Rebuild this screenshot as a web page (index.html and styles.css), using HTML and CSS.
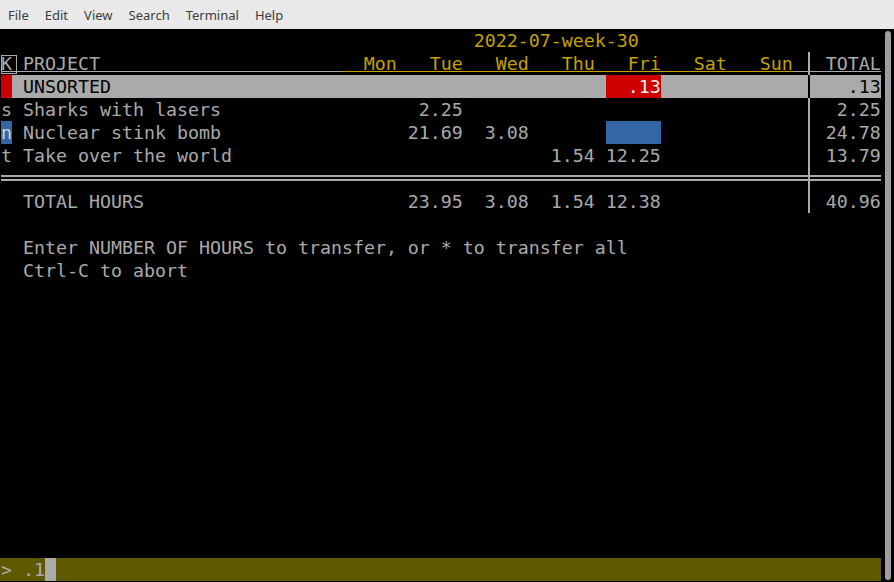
FILE: index.html
```html
<!DOCTYPE html>
<html>
<head>
<meta charset="utf-8">
<title>Terminal</title>
<link rel="stylesheet" href="styles.css">
</head>
<body>
<div class="window">
  <nav class="menubar">
    <span>File</span><span>Edit</span><span>View</span><span>Search</span><span>Terminal</span><span>Help</span>
  </nav>
  <div class="term">
    <div class="screen">
      <div class="row"><span class="week">2022-07-week-30</span></div>
      <div class="row head">
        <span class="main"><span class="c kbox ul">K</span><span class="name ul">PROJECT</span><span class="days ul-y">  Mon   Tue   Wed   Thu   Fri   Sat   Sun</span><span class="c ul"> </span></span><span class="vbar"></span><span class="tot ul">TOTAL</span>
      </div>
      <div class="row sel">
        <span class="main"><span class="c red"></span><span class="name">UNSORTED</span><span class="d"></span><span class="d"></span><span class="d"></span><span class="d"></span><span class="d hot">.13</span><span class="d"></span><span class="d"></span></span><span class="vbar"></span><span class="tot">.13</span>
      </div>
      <div class="row">
        <span class="main"><span class="c">s</span><span class="name">Sharks with lasers</span><span class="d"></span><span class="d">2.25</span><span class="d"></span><span class="d"></span><span class="d"></span><span class="d"></span><span class="d"></span></span><span class="vbar"></span><span class="tot">2.25</span>
      </div>
      <div class="row">
        <span class="main"><span class="c key">n</span><span class="name">Nuclear stink bomb</span><span class="d"></span><span class="d">21.69</span><span class="d">3.08</span><span class="d"></span><span class="d blue"></span><span class="d"></span><span class="d"></span></span><span class="vbar"></span><span class="tot">24.78</span>
      </div>
      <div class="row">
        <span class="main"><span class="c">t</span><span class="name">Take over the world</span><span class="d"></span><span class="d"></span><span class="d"></span><span class="d">1.54</span><span class="d">12.25</span><span class="d"></span><span class="d"></span></span><span class="vbar"></span><span class="tot">13.79</span>
      </div>
      <div class="row dbl">
        <span class="main"></span><span class="vbar"></span><span class="tot"></span>
      </div>
      <div class="row">
        <span class="main"><span class="c"></span><span class="name">TOTAL HOURS</span><span class="d"></span><span class="d">23.95</span><span class="d">3.08</span><span class="d">1.54</span><span class="d">12.38</span><span class="d"></span><span class="d"></span></span><span class="vbar"></span><span class="tot">40.96</span>
      </div>
      <div class="row"></div>
      <div class="row msg">Enter NUMBER OF HOURS to transfer, or * to transfer all</div>
      <div class="row msg">Ctrl-C to abort</div>
      <div class="row prompt">&gt; .1<span class="cursor"></span></div>
    </div>
    <div class="scrollbar"><div class="thumb"></div></div>
  </div>
</div>
</body>
</html>
```

FILE: styles.css
```css
* { box-sizing: border-box; }

html, body {
  margin: 0;
  padding: 0;
  background: #000;
  overflow: hidden;
}

.window {
  width: 894px;
  height: 582px;
  display: flex;
  flex-direction: column;
}

.menubar {
  height: 29px;
  flex: none;
  display: flex;
  align-items: center;
  background: #e9e9e9;
  color: #3c3c3c;
  font-family: "Noto Sans", "DejaVu Sans", sans-serif;
  font-size: 13px;
}

.menubar span {
  padding: 0 8px;
}

.term {
  flex: 1;
  display: flex;
  align-items: flex-start;
  background: #000;
}

.screen {
  margin-left: 1px;
  width: 80ch;
  height: 552px;
  flex: none;
  display: flex;
  flex-direction: column;
  font-family: "DejaVu Sans Mono", monospace;
  font-size: 18.27px;
  line-height: 23px;
  color: #aaaaaa;
  white-space: pre;
}

.row {
  display: flex;
  height: 23px;
  flex: none;
}

.row > *, .main > * { flex: none; }

.main {
  display: flex;
  width: 73ch;
}

.c { width: 1ch; }

.name {
  width: 30ch;
  padding-left: 1ch;
}

.d {
  width: 5ch;
  margin-right: 1ch;
  text-align: right;
}

.days { width: 41ch; }

.tot {
  width: 6ch;
  text-align: right;
}

.vbar {
  width: 1ch;
  background: linear-gradient(to right, transparent 4px, #aaaaaa 4px, #aaaaaa 6px, transparent 6px);
}

.week {
  padding-left: 43ch;
  color: #c4a000;
}

/* header row */
.ul {
  background: linear-gradient(to bottom, transparent 19px, #aaaaaa 19px, #aaaaaa 20px, transparent 20px);
}

.ul-y {
  color: #c4a000;
  background: linear-gradient(to bottom, transparent 19px, #c4a000 19px, #c4a000 20px, transparent 20px);
}

.head .vbar {
  background:
    linear-gradient(to right, transparent 4px, #aaaaaa 4px, #aaaaaa 6px, transparent 6px),
    linear-gradient(to bottom, transparent 19px, #aaaaaa 19px, #aaaaaa 20px, transparent 20px);
}

.kbox { position: relative; }

.kbox::before {
  content: "";
  position: absolute;
  left: 0;
  top: 3px;
  width: 14px;
  height: 17px;
  border: 1px solid #aaaaaa;
}

/* selected row */
.sel { color: #000; }

.sel .main,
.sel .tot {
  background: #aaaaaa;
}

.sel .hot {
  background: #cc0000;
  color: #f0f0f0;
}

.sel .vbar {
  background: linear-gradient(to right, #aaaaaa 4px, #000 4px, #000 6px, #aaaaaa 6px);
}

.red { background: #cc0000; }

.key {
  background: #3465a4;
  color: #d3d7cf;
}

.blue { background: #3465a4; }

/* double rule */
.dbl {
  background: linear-gradient(to bottom, transparent 8px, #aaaaaa 8px, #aaaaaa 10px, transparent 10px, transparent 12px, #aaaaaa 12px, #aaaaaa 14px, transparent 14px);
}

.dbl .vbar {
  background:
    linear-gradient(to right, transparent 4px, #aaaaaa 4px, #aaaaaa 6px, transparent 6px),
    linear-gradient(to bottom, transparent 8px, #aaaaaa 8px, #aaaaaa 10px, transparent 10px, transparent 12px, #aaaaaa 12px, #aaaaaa 14px, transparent 14px);
}

.msg { padding-left: 2ch; }

.prompt {
  margin-top: auto;
  margin-left: -1px;
  padding-left: 1px;
  width: calc(80ch + 1px);
  background: #5e5900;
}

.cursor {
  display: block;
  width: 1ch;
  background: #aaaaaa;
}

.scrollbar {
  flex: 1;
  align-self: stretch;
  display: flex;
  padding: 2px 3px 2px 4px;
}

.thumb {
  flex: 1;
  background: #9e9e9e;
  border-radius: 3px;
}
```
